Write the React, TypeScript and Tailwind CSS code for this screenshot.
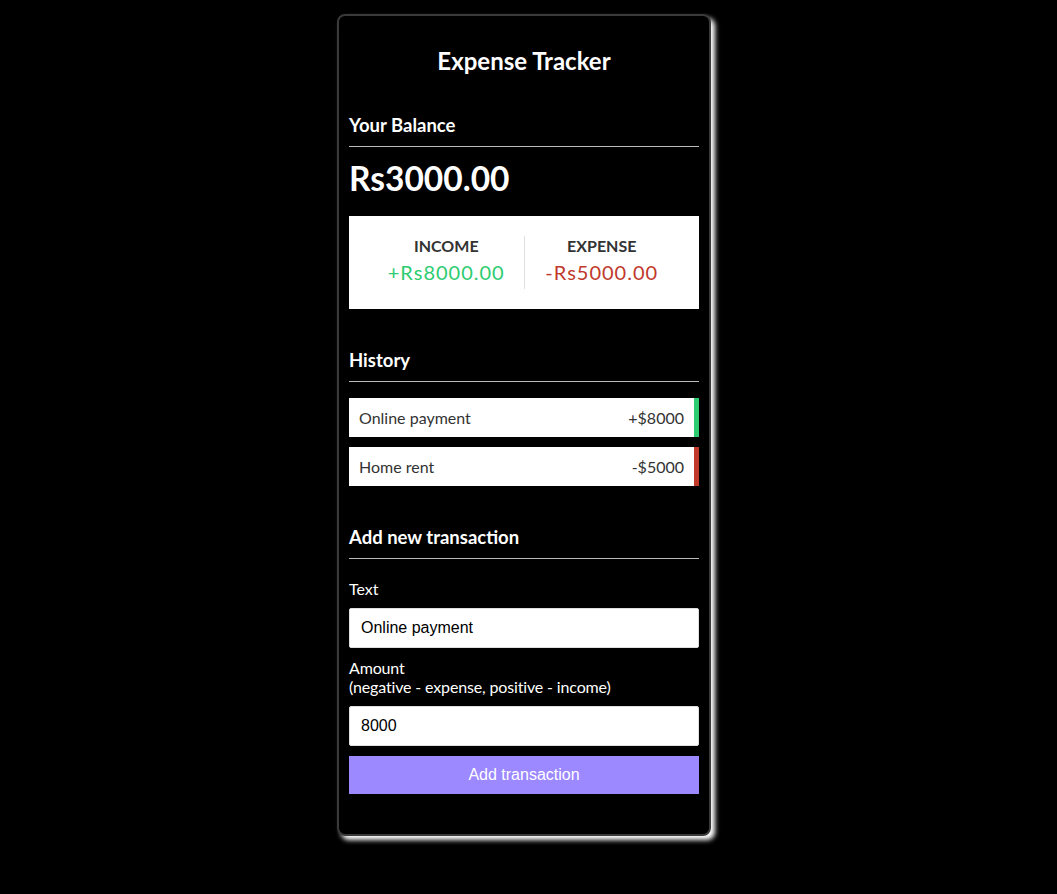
const HISTORY = [
  { text: "Online payment", amount: "+$8000", border: "border-[#2ecc71]" },
  { text: "Home rent", amount: "-$5000", border: "border-[#c0392b]" },
];

function Heading({ children, className = "" }: { children: string; className?: string }) {
  return (
    <h3
      className={
        "border-b border-[#bbb] pb-[10px] text-[18.5px] font-bold leading-[22px] text-white " +
        className
      }
    >
      {children}
    </h3>
  );
}

export default function App() {
  return (
    <div className="min-h-screen bg-black pr-[9px] pt-[14px] font-['Lato','Noto_Sans',sans-serif]">
      <div className="mx-auto w-[374px] rounded-lg border-2 border-[#3a3a3a] bg-black p-[10px] shadow-[4px_4px_5px_#ffffff]">
        <h2 className="mt-[20px] text-center text-[24px] font-bold leading-[29px] text-white">
          Expense Tracker
        </h2>

        <Heading className="mt-[39px]">Your Balance</Heading>
        <h1 className="mt-[11px] text-[33.5px] font-bold leading-[40px] text-white">Rs3000.00</h1>

        <div className="mt-[18px] flex bg-white p-[20px]">
          <div className="flex-1 text-center">
            <h4 className="text-[16px] font-bold uppercase leading-[20px] text-[#333]">
              Income
            </h4>
            <p className="mb-[5px] mt-[4px] text-[20px] leading-[24px] tracking-[1px] text-[#2ecc71]">
              +Rs8000.00
            </p>
          </div>
          <div className="w-px self-stretch bg-[#dedede]" />
          <div className="flex-1 text-center">
            <h4 className="text-[16px] font-bold uppercase leading-[20px] text-[#333]">
              Expense
            </h4>
            <p className="mb-[5px] mt-[4px] text-[20px] leading-[24px] tracking-[1px] text-[#c0392b]">
              -Rs5000.00
            </p>
          </div>
        </div>

        <Heading className="mt-[40px]">History</Heading>
        <ul className="mt-[16px] flex flex-col gap-[10px]">
          {HISTORY.map((h) => (
            <li
              key={h.text}
              className={
                "flex h-[39px] items-center justify-between border-r-[5px] bg-white px-[10px] text-[16px] text-[#333] " +
                h.border
              }
            >
              <span>{h.text}</span>
              <span>{h.amount}</span>
            </li>
          ))}
        </ul>

        <Heading className="mt-[40px]">Add new transaction</Heading>
        <form className="mt-[20px]" onSubmit={(e) => e.preventDefault()}>
          <label className="block text-[16px] leading-[19px] text-white">Text</label>
          <input
            type="text"
            defaultValue="Online payment"
            className="mt-[10px] block h-[40px] w-full rounded-[2px] border border-[#dedede] bg-white px-[11px] font-['Liberation_Sans',Arial,sans-serif] text-[16px] text-black outline-none"
          />
          <label className="mt-[10px] block text-[16px] leading-[19px] tracking-[-0.15px] text-white">
            Amount
            <br />
            (negative - expense, positive - income)
          </label>
          <input
            type="number"
            defaultValue="8000"
            className="mt-[10px] block h-[40px] w-full rounded-[2px] border border-[#dedede] bg-white px-[11px] font-['Liberation_Sans',Arial,sans-serif] text-[16px] text-black outline-none [appearance:textfield] [&::-webkit-inner-spin-button]:appearance-none"
          />
          <button
            type="submit"
            className="mb-[30px] mt-[10px] block h-[38px] w-full bg-[#9c88ff] font-['Liberation_Sans',Arial,sans-serif] text-[16px] text-white"
          >
            Add transaction
          </button>
        </form>
      </div>
    </div>
  );
}
